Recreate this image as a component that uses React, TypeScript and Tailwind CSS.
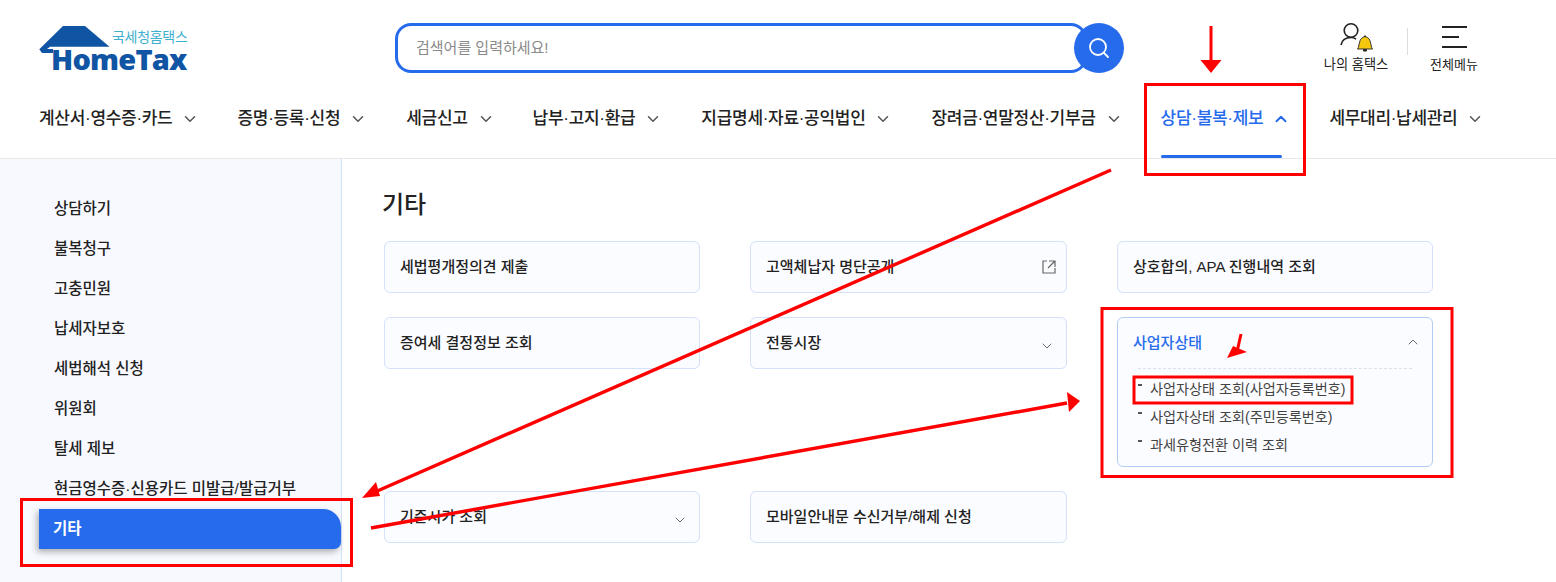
import React from "react";
import { ChevronDown, ChevronUp, Search } from "lucide-react";

const nav = [
  ["계산서·영수증·카드", 0, "mr-[38px]"],
  ["증명·등록·신청", 0, "mr-[39px]"],
  ["세금신고", 0, "mr-[38px]"],
  ["납부·고지·환급", 0, "mr-[39px]"],
  ["지급명세·자료·공익법인", 0, "mr-[39px]"],
  ["장려금·연말정산·기부금", 0, "mr-[38px]"],
  ["상담·불복·제보", 1, "mr-[39px]"],
  ["세무대리·납세관리", 0, ""],
] as const;

const side = ["상담하기", "불복청구", "고충민원", "납세자보호", "세법해석 신청", "위원회", "탈세 제보", "현금영수증·신용카드 미발급/발급거부"];

function Card({ label, icon }: { label: string; icon?: "down" | "ext" }) {
  return (
    <div className="h-[52px] rounded-md border border-[#d3e1fb] bg-[#fbfcff] flex items-center justify-between pl-[15px] pr-[11px]">
      <span className="text-[15px] font-medium text-[#222]">{label}</span>
      {icon === "down" && <ChevronDown size={16} strokeWidth={1.3} className="text-[#555] mt-[5px]" />}
      {icon === "ext" && (
        <svg width="14" height="14" viewBox="0 0 14 14" fill="none" stroke="#666" strokeWidth="1.2" className="-mr-[1px]">
          <path d="M5 1H1V13H13V8" />
          <path d="M7 1H13V7M13 1L6 8" />
        </svg>
      )}
    </div>
  );
}

export default function App() {
  return (
    <div className="relative w-[1556px] h-[582px] overflow-hidden bg-white font-['Liberation_Sans','Noto_Sans_CJK_KR',sans-serif]">
      <header className="h-[159px] border-b border-[#e8e8e8] flex flex-col">
        <div className="h-[96px] flex items-start">
          <div className="ml-[39px] mt-[26px] w-[149px] h-[46px] relative">
            <svg width="72" height="46" viewBox="0 0 72 46" className="absolute left-0 top-0">
              <path d="M0.3 23.3 L24 0 H46 L70.5 20.7 H11 L8 23 L14 23 V27 H3 Z" fill="#0f55a4" />
            </svg>
            <span className="absolute left-[73px] top-[2px] text-[14px] leading-[18px] text-[#3eb0cd] tracking-[-0.3px]">국세청홈택스</span>
            <span className="absolute left-[12px] top-[21px] text-[29px] leading-[24px] font-extrabold text-[#0f55a4] font-['Open_Sans',sans-serif] tracking-[-0.8px]">HomeTax</span>
          </div>
          <div className="ml-[207px] mt-[23px] flex items-center">
            <div className="w-[692px] h-[50px] rounded-[16px] border-[3px] border-[#266bec] bg-white flex items-center pl-[18px] pt-[1px]">
              <span className="text-[15px] text-[#8a8a8a]">검색어를 입력하세요!</span>
            </div>
            <div className="-ml-[13px] w-[50px] h-[50px] rounded-full bg-[#266bec] flex items-center justify-center">
              <Search size={24} strokeWidth={1.8} className="text-white" />
            </div>
          </div>
          <div className="ml-[199px] mt-[23px] flex flex-col items-center w-[66px]">
            <svg width="32" height="30" viewBox="0 0 32 30" fill="none" className="overflow-visible">
              <circle cx="11" cy="7.5" r="6.8" stroke="#222" strokeWidth="1.6" />
              <path d="M1 22 C2 17 6 14.5 11 14.5 C13 14.5 14.5 15 16 16" stroke="#222" strokeWidth="1.6" />
              <path d="M17.5 26 C20 23 18 15 25 13.5 C32 15 30 23 32.5 26 Z" fill="#f5c80f" stroke="#333" strokeWidth="1" />
              <rect x="23" y="26" width="4" height="2.5" rx="1" fill="#222" />
              <rect x="24.2" y="12.5" width="1.6" height="1.5" fill="#222" />
            </svg>
            <span className="text-[13.2px] leading-[18px] mt-[3px] text-[#222] whitespace-nowrap">나의 홈택스</span>
          </div>
          <div className="ml-[18px] mt-[28px] w-px h-[27px] bg-[#ddd]" />
          <div className="ml-[21px] mt-[26px] w-[50px] flex flex-col items-center">
            <div className="w-[25px] flex flex-col gap-[8px]">
              <div className="h-[2px] w-[25px] bg-[#222]" />
              <div className="h-[2px] w-[17px] bg-[#222]" />
              <div className="h-[2px] w-[25px] bg-[#222]" />
            </div>
            <span className="text-[13px] leading-[18px] mt-[8px] text-[#222] whitespace-nowrap">전체메뉴</span>
          </div>
        </div>
        <nav className="flex-1 flex pl-[39px]">
          {nav.map(([t, active, m]) => (
            <div key={t} className={`relative flex items-start gap-[9px] pt-[10px] ${m} ${active ? "text-[#266bec]" : "text-[#222]"}`}>
              <span className="text-[17px] leading-[26px] font-medium tracking-[-0.3px] whitespace-nowrap">{t}</span>
              {active ? (
                <ChevronUp size={18} strokeWidth={2.6} className="mt-[4px]" />
              ) : (
                <ChevronDown size={18} strokeWidth={2} className="mt-[4px] text-[#555]" />
              )}
              {active ? <div className="absolute left-0 right-[8px] top-[59px] h-[3px] rounded-sm bg-[#266bec]" /> : null}
            </div>
          ))}
        </nav>
      </header>

      <div className="flex h-[423px]">
        <aside className="w-[342px] shrink-0 bg-[#f8f9fe] border-r border-[#d3e1fb] pt-[30px] pl-[39px]">
          {side.map((s) => (
            <div key={s} className="h-[40px] flex items-center pl-[15px] text-[15.5px] font-medium text-[#222] whitespace-nowrap">{s}</div>
          ))}
          <div className="h-[40px] flex items-center pl-[14px] rounded-tr-[18px] rounded-br-[7px] bg-[#266bec] text-white text-[15.5px] font-bold shadow-[-2px_3px_6px_rgba(0,0,0,0.3)]">기타</div>
        </aside>
        <main className="pl-[40px] pt-[29px]">
          <h2 className="text-[24px] leading-[34px] font-medium text-[#222]">기타</h2>
          <div className="mt-[19px] ml-[2px] grid grid-cols-[316px_317px_316px] gap-x-[50px] gap-y-[24px] items-start">
            <Card label="세법평개정의견 제출" />
            <Card label="고액체납자 명단공개" icon="ext" />
            <Card label="상호합의, APA 진행내역 조회" />
            <Card label="증여세 결정정보 조회" />
            <Card label="전통시장" icon="down" />
            <div className="h-[150px] rounded-md border border-[#b4cbf6] bg-[#fbfcff] px-[15px]">
              <div className="h-[50px] flex items-center justify-between -mr-[5px]">
                <span className="text-[15px] font-medium text-[#266bec]">사업자상태</span>
                <ChevronUp size={16} strokeWidth={1.3} className="text-[#555] mr-[1px] mb-[3px]" />
              </div>
              <div className="mx-[5px] border-t border-dashed border-[#dcdfe8]" />
              <ul className="mt-[7px] text-[14.15px] text-[#444]">
                {["사업자상태 조회(사업자등록번호)", "사업자상태 조회(주민등록번호)", "과세유형전환 이력 조회"].map((x) => (
                  <li key={x} className="h-[28px] flex items-center relative pl-[17px] whitespace-nowrap">
                    <span className="absolute left-[5px] top-[8px] w-[4px] h-[2px] bg-[#555]" />
                    {x}
                  </li>
                ))}
              </ul>
            </div>
            <Card label="기준시가 조회" icon="down" />
            <Card label="모바일안내문 수신거부/해제 신청" />
          </div>
        </main>
      </div>

      <svg className="absolute inset-0 pointer-events-none" width="1556" height="582" viewBox="0 0 1556 582" fill="none">
        <g stroke="#f00" strokeWidth="3">
          <rect x="1145.5" y="84.5" width="159" height="90" />
          <rect x="1102" y="308.5" width="350" height="168" />
          <rect x="1134" y="377" width="218" height="26" />
          <rect x="21.5" y="499.5" width="330" height="66" />
          <path d="M1211 26V60" />
          <path d="M1111 170L375 492" strokeWidth="3.4" />
          <path d="M371 528L1067 403" strokeWidth="3.4" />
          <path d="M1241 334L1237 352" />
        </g>
        <g fill="#f00">
          <path d="M1200.5 60H1221.5L1211 73Z" />
          <path d="M362 498L376 482L380 496Z" />
          <path d="M1080 401L1067 392L1069 412Z" />
          <path d="M1227 358L1247 352L1233 346Z" />
        </g>
      </svg>
    </div>
  );
}
